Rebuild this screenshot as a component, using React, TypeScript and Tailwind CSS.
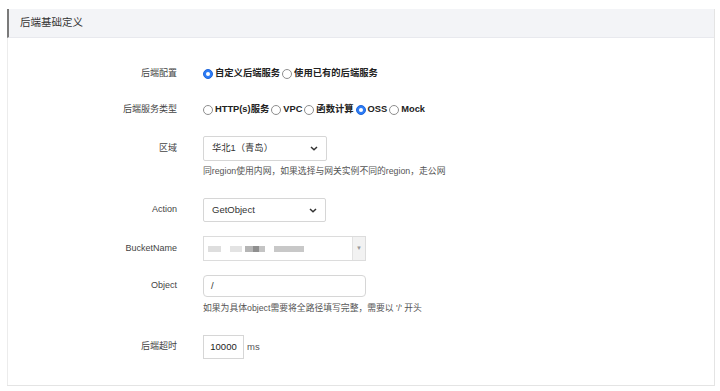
const font = { fontFamily: '"Liberation Sans", "Noto Sans CJK SC", sans-serif' };

const Radio: React.FC<{ checked?: boolean; label: string }> = ({ checked, label }) => (
  <span className="flex items-center">
    {checked ? (
      <span className="w-[10px] h-[10px] rounded-full bg-[#2d7cf6] border border-[#1f66d9] flex items-center justify-center">
        <span className="w-[4px] h-[4px] rounded-full bg-white" />
      </span>
    ) : (
      <span className="w-[10px] h-[10px] rounded-full bg-white border border-[#8e8e8e]" />
    )}
    <span className="ml-[2px] mr-[2px] text-[9.3px] font-bold text-[#222]">{label}</span>
  </span>
);

const Chevron: React.FC = () => (
  <svg width="8" height="5" viewBox="0 0 8 5" className="text-[#333]">
    <path d="M1 1l3 2.8L7 1" fill="none" stroke="currentColor" strokeWidth="1.5" />
  </svg>
);

const Row: React.FC<{ label: string; className?: string; children: React.ReactNode }> = ({
  label,
  className,
  children,
}) => (
  <div className={`flex items-center ${className ?? ""}`}>
    <div className="w-[169px] shrink-0 text-right text-[9px] text-[#444]">{label}</div>
    <div className="ml-[26px] flex items-center">{children}</div>
  </div>
);

const Help: React.FC<{ children: React.ReactNode; className?: string }> = ({ children, className }) => (
  <div className={`pl-[195px] text-[8.8px] leading-[14px] text-[#555] ${className ?? ""}`}>{children}</div>
);

export default function App() {
  return (
    <div className="w-[720px] h-[391px] bg-white pt-[9px] pl-[7px]" style={font}>
      <div className="w-[708px] h-[377px] border-r border-b border-[#e4e4e4]">
        <div className="h-[29px] bg-[#f3f4f7] border-l-2 border-[#7a7a7a] border-b border-b-[#e8e9ee] flex items-center pl-[11px]">
          <span className="text-[10.5px] text-[#333]">后端基础定义</span>
        </div>
        <div className="flex flex-col border-l border-[#ececec] h-[347px]">
          <Row label="后端配置" className="h-5 mt-[26px]">
            <Radio checked label="自定义后端服务" />
            <Radio label="使用已有的后端服务" />
          </Row>
          <Row label="后端服务类型" className="h-5 mt-4">
            <Radio label="HTTP(s)服务" />
            <Radio label="VPC" />
            <Radio label="函数计算" />
            <Radio checked label="OSS" />
            <Radio label="Mock" />
          </Row>
          <Row label="区域" className="mt-4">
            <div className="w-[124px] h-[25px] border border-[#d6d6d6] rounded-[2px] flex items-center justify-between pl-[8px] pr-[8px]">
              <span className="text-[9.3px] text-[#333]">华北1（青岛）</span>
              <Chevron />
            </div>
          </Row>
          <Help className="mt-[3px]">同region使用内网，如果选择与网关实例不同的region，走公网</Help>
          <Row label="Action" className="mt-5">
            <div className="w-[123px] h-[24px] border border-[#d6d6d6] rounded-[2px] flex items-center justify-between pl-[8px] pr-[8px]">
              <span className="text-[9.5px] text-[#333]">GetObject</span>
              <Chevron />
            </div>
          </Row>
          <Row label="BucketName" className="mt-[14px]">
            <div className="w-[163px] h-[25px] border border-[#dcdcdc] flex items-stretch">
              <div className="flex-1 flex items-center pl-[4px] gap-[3px]">
                <span className="w-[13px] h-[6px] bg-[#dedede] blur-[0.5px]" />
                <span className="w-[12px] h-[6px] bg-[#e3e3e3] ml-[6px] blur-[0.5px]" />
                <span className="w-[8px] h-[6px] bg-[#b5b5b5] blur-[0.5px]" />
                <span className="w-[6px] h-[6px] bg-[#8f8f8f] -ml-[3px] blur-[0.5px]" />
                <span className="w-[6px] h-[6px] bg-[#c4c4c4] -ml-[3px] blur-[0.5px]" />
                <span className="w-[30px] h-[6px] bg-[#c8c8c8] ml-[6px] blur-[0.5px]" />
              </div>
              <div className="w-[13px] bg-[#f2f2f2] border-l border-[#e2e2e2] flex items-center justify-center">
                <span className="text-[6px] text-[#999]">▼</span>
              </div>
            </div>
          </Row>
          <Row label="Object" className="mt-[14px]">
            <div className="w-[163px] h-[22px] border border-[#d6d6d6] rounded-[4px] flex items-center pl-[7px]">
              <span className="text-[9.5px] text-[#333]">/</span>
            </div>
          </Row>
          <Help className="mt-[4px]">如果为具体object需要将全路径填写完整，需要以 '/' 开头</Help>
          <Row label="后端超时" className="mt-5">
            <div className="w-[41px] h-[24px] border border-[#d6d6d6] flex items-center justify-center">
              <span className="text-[9.5px] text-[#222]">10000</span>
            </div>
            <span className="ml-[3px] text-[9.5px] text-[#555]">ms</span>
          </Row>
        </div>
      </div>
    </div>
  );
}
